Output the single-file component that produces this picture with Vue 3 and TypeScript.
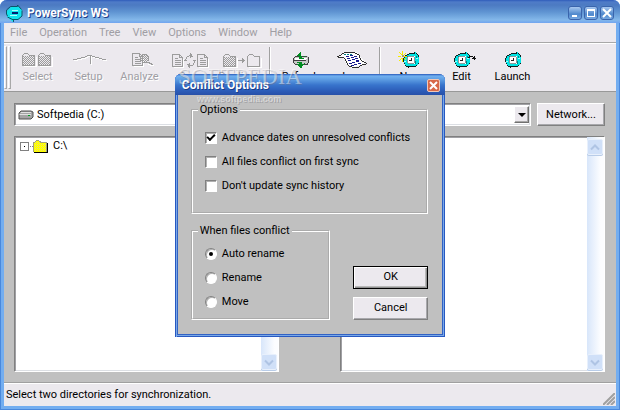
<script setup lang="ts">
import { ref } from 'vue'

interface Tool {
  label: string
  icon: string
  disabled?: boolean
}

const menus: string[] = ['File', 'Operation', 'Tree', 'View', 'Options', 'Window', 'Help']

const toolGroups: Tool[][] = [
  [
    { label: 'Select', icon: 'select', disabled: true },
    { label: 'Setup', icon: 'setup', disabled: true },
    { label: 'Analyze', icon: 'analyze', disabled: true },
    { label: 'Sync', icon: 'sync', disabled: true },
    { label: 'Duplicate', icon: 'duplicate', disabled: true },
  ],
  [
    { label: 'Refresh', icon: 'refresh' },
    { label: 'Log', icon: 'log' },
  ],
  [
    { label: 'New', icon: 'new' },
    { label: 'Edit', icon: 'edit' },
    { label: 'Launch', icon: 'launch' },
  ],
]

const panes = ref([
  { id: 'source', name: 'Source', drive: 'Softpedia (C:)', root: 'C:\\' },
  { id: 'target', name: 'Target', drive: '', root: '' },
])

const checks = ref([
  { id: 'advance', label: 'Advance dates on unresolved conflicts', on: true },
  { id: 'first', label: 'All files conflict on first sync', on: false },
  { id: 'history', label: "Don't update sync history", on: false },
])

const actions: string[] = ['Auto rename', 'Rename', 'Move']
const action = ref('Auto rename')
</script>

<template>
  <div class="window">
    <svg class="defs" width="0" height="0" aria-hidden="true">
      <defs>
        <pattern id="dots" width="2" height="2" patternUnits="userSpaceOnUse">
          <rect width="1" height="1" fill="#9c9c9c" />
          <rect x="1" y="1" width="1" height="1" fill="#9c9c9c" />
        </pattern>
        <pattern id="yellow" width="2" height="2" patternUnits="userSpaceOnUse">
          <rect width="2" height="2" fill="#ffff00" />
          <rect width="1" height="1" fill="#e8e070" />
        </pattern>
        <g id="folder" fill="none">
          <path d="M2 13.500H14V4" stroke="#fff" />
          <path d="M.5 12.500V2.500L2.500.5H5.500L7.500 2.500H12.500V12.500Z" stroke="#9c9c9c" />
        </g>
        <g id="page" fill="none">
          <path d="M1.500 13.500H11.500V4.500" stroke="#fff" />
          <path d="M.5.5H7.500L10.500 3.500V12.500H.5ZM7.500.5V3.500H10.500M2.500 4.500H6M2.500 6.500H8.500M2.500 8.500H8.500M2.500 10.500H8.500" stroke="#9c9c9c" />
        </g>
        <g id="ring">
          <path d="M5 2H11V0H12L16 4V11L13 14H6V16H5L1 12V5Z" fill="#00e4e4" />
          <path d="M1.500 12V10.500M.5 10V6M1.500 5.500V4M2 3.500H4M4 2.500H6M6 1.500H11M11.500 0V2M13 1.500H14M14 2.500H15M15.500 3V5M14.500 11.500H15.500M13 13.500H14M9 14.500H13M6 14.500H9M5.500 14V16M3 14.500H5M2 13.500H3" fill="none" stroke="#102020" />
          <path d="M4.500 6V4.500H7M12.500 9V11.500H10M13.500 4V6" fill="none" stroke="#008484" />
          <path d="M1 9.500H3M13 6.500H15" stroke="#a0ffff" />
          <rect x="5" y="4" width="7" height="8" fill="#fff" />
          <path d="M5 4.500H11M4.500 5V11M5 11.500H11M11.500 5V11" stroke="#909898" />
          <path d="M8.500 6V8.500H6" fill="none" stroke="#202020" />
        </g>
      </defs>
    </svg>

    <header class="titlebar">
      <svg class="logo" width="17" height="17" viewBox="0 0 17 17" aria-hidden="true">
        <path d="M1 6L5 2H11V0L16 5V11L12 15H7V17L1 12Z" fill="#10e4ec" />
        <path d="M1.500 11L.5 9V5L4.500 1.500H11.500V0L15.500 4.500M7.500 17V15L1.500 12M16 5.500V11L12 14.500H7" fill="none" stroke="#0c5468" />
        <path d="M6 7h6v2H6z" fill="#002070" />
        <path d="M4 10.500h7M6 5.500h6" stroke="#a8ffff" />
      </svg>
      <h1 class="caption">PowerSync WS</h1>
      <button class="sysbutton" type="button" aria-label="Minimize">
        <svg width="10" height="10" viewBox="0 0 10 10"><path d="M2 7h5v2H2z" fill="#fff" /></svg>
      </button>
      <button class="sysbutton" type="button" aria-label="Maximize">
        <svg width="10" height="10" viewBox="0 0 10 10"><path d="M1 1h8v8H1zM2 3v5h6V3z" fill="#fff" fill-rule="evenodd" /></svg>
      </button>
      <button class="sysbutton" type="button" aria-label="Close">
        <svg width="10" height="10" viewBox="0 0 10 10"><path d="M1 1L9 9M9 1L1 9" stroke="#fff" stroke-width="2" /></svg>
      </button>
    </header>

    <div class="client">
      <nav class="menubar">
        <button v-for="m in menus" :key="m" class="menu" type="button">{{ m }}</button>
      </nav>

      <div class="toolbar">
        <span class="grip"></span>
        <span class="grip"></span>
        <div v-for="(group, g) in toolGroups" :key="g" class="group">
          <button v-for="t in group" :key="t.label" class="tool" type="button" :disabled="t.disabled">
            <svg width="40" height="18" viewBox="0 0 40 18" shape-rendering="crispEdges" aria-hidden="true">
              <template v-if="t.icon === 'select'">
                <g transform="translate(4 2)"><path d="M1 3h11v9H1z" fill="url(#dots)" /><use href="#folder" /></g>
                <g transform="translate(20 2)"><path d="M1 3h11v9H1z" fill="url(#dots)" /><use href="#folder" /></g>
              </template>
              <template v-else-if="t.icon === 'setup'">
                <path d="M4 8.500H8M8 7.500H12M12 6.500H16M16 5.500H18M18 4.500H23M23 5.500H26M26 6.500H30M30 7.500H33M33 8.500H37M21.500 5V13" transform="translate(1 1)" stroke="#fff" />
                <path d="M4 8.500H8M8 7.500H12M12 6.500H16M16 5.500H18M18 4.500H23M23 5.500H26M26 6.500H30M30 7.500H33M33 8.500H37M21.500 5V13" stroke="#9c9c9c" />
              </template>
              <template v-else-if="t.icon === 'analyze'">
                <g transform="translate(12 2)"><use href="#page" /></g>
                <rect x="21" y="4" width="7" height="7" fill="url(#dots)" />
                <path d="M22 3.500H27M20.500 5V10M28.500 5V10M22 11.500H28M21 4.500H22M27 4.500H28M28 11.500H30M29 12.500H32M31 13.500H33" stroke="#9c9c9c" fill="none" />
                <path d="M30 14.500H34M28 13.500H30" stroke="#fff" />
              </template>
              <template v-else-if="t.icon === 'sync'">
                <g transform="translate(1 3)"><use href="#page" /></g>
                <g transform="translate(26 3)"><use href="#page" /></g>
                <path d="M14.500 8V10M15.500 6V8M16 5.500H18M18 4.500H21M19.500 2V7M20.500 3V6M21 5.500H22M13 9.500H16M23.500 9V12M22.500 12V14M20 14.500H22M17 14.500H20M18.500 12V17M17.500 13V16M22 9.500H25M16 13.500H17" fill="none" stroke="#9c9c9c" />
              </template>
              <template v-else-if="t.icon === 'duplicate'">
                <g transform="translate(1 3)"><path d="M1 3h11v9H1z" fill="url(#dots)" /><use href="#folder" /></g>
                <g transform="translate(25 3)"><use href="#folder" /></g>
                <path d="M16 9.500H23M21.500 8V11M20.500 7V12" stroke="#9c9c9c" />
              </template>
              <template v-else-if="t.icon === 'refresh'">
                <path d="M12 8L15 5H26L28 7V12L25 14H14L12 12Z" fill="#c8c8c8" />
                <path d="M14 5.500H26M13 6.500H14M12.500 7V12M13 12.500H14M14 13.500H26M26 12.500H27M27.500 6V12M26 13.500H27M13 9.500H25" fill="none" stroke="#404040" />
                <path d="M14 7.500H26M14 8.500H25" stroke="#fff" />
                <path d="M18 8V5H16V4H17V3H18V2H19V1H20V5H21V8ZM20 6H21V7H23V5H24V6H23V8H20ZM19 11H21V13H24V12H23V14H22V15H21V17H19V16H18V15H17V14H16V13H18V12H16V11Z" fill="#008c20" />
              </template>
              <template v-else-if="t.icon === 'log'">
                <path d="M5 6L12 1H24L27 4L34 12L20 17L15 14L12 8L8 6Z" fill="#fff" />
                <path d="M5 5.500H7M7 4.500H9M9 3.500H10M10 2.500H12M12 1.500H23M23 2.500H25M25 3.500H27M27.500 4V7M28.500 7V9M29.500 9V10M30 10.500H32M32 11.500H34M34 12.500H35M30 13.500H34M28 14.500H30M27 15.500H28M20 16.500H27M17 15.500H20M16 14.500H17M15.500 12V14M14.500 10V12M13.500 8V10M12 7.500H13M6 6.500H12" fill="none" stroke="#303030" />
                <path d="M14 5.500H18M18 4.500H22M22 5.500H25M15 7.500H19M19 6.500H23M23 7.500H26M16 9.500H20M20 8.500H24M24 9.500H27M17 12.500H20M20 11.500H24M24 10.500H28M19 14.500H22M22 13.500H26M26 12.500H29" stroke="#181890" stroke-dasharray="3 1" />
                <path d="M12 3.500H20" stroke="#008080" stroke-dasharray="2 1" />
              </template>
              <template v-else>
                <g transform="translate(12 1)"><use href="#ring" /></g>
                <g v-if="t.icon === 'new'" stroke="#f4ec00">
                  <path d="M11.500 0V4M11.500 7V11M7 5.500H10M13 5.500H16" />
                  <path d="M8 1.500H9M9 2.500H10M10 3.500H11M14 2.500H15M13 3.500H14M8 9.500H9M9 8.500H10M10 7.500H11M13 7.500H14M14 8.500H15" />
                  <path d="M11 4h2v2h-2z" fill="#a8a070" stroke="none" />
                </g>
                <path v-if="t.icon === 'edit'" d="M26 6.500H28M28 5.500H31M31.500 6V8M30 7.500H34M32.500 5V9" fill="none" stroke="#101010" />
              </template>
            </svg>
            <span>{{ t.label }}</span>
          </button>
        </div>
      </div>

      <main class="workspace">
        <section v-for="p in panes" :key="p.id" class="side">
          <div class="drivebar">
            <div class="combo">
              <svg v-if="p.drive" width="16" height="10" viewBox="0 0 16 10" aria-hidden="true">
                <path d="M1 3L3 1H13L15 2V7L13 9H1Z" fill="#a4a4a4" stroke="#505050" />
                <path d="M3 2.500H13M1.500 4.500H13" stroke="#e0e0e0" />
                <path d="M10 5h2v1h-2z" fill="#00a020" />
              </svg>
              <select v-model="p.drive" :aria-label="p.name + ' drive'">
                <option :value="p.drive">{{ p.drive }}</option>
              </select>
              <span class="drop"></span>
            </div>
            <button class="push network" type="button">Network...</button>
          </div>
          <div class="pane">
            <ul class="tree">
              <li v-if="p.root" class="node">
                <button class="expander" type="button" aria-label="Expand"></button>
                <svg width="18" height="13" viewBox="-3 0 18 13" shape-rendering="crispEdges" aria-hidden="true">
                  <path d="M-3 6.500H0" stroke="#808080" stroke-dasharray="1 1" />
                  <path d="M1 3h13v9H1zM2 1h5v2H2z" fill="url(#yellow)" />
                  <path d="M.5 12V2.500H2M2 1.500H3M3 .5H6M6 1.500H8M7 2.500H13.500V12" fill="none" stroke="#a0a080" />
                  <path d="M1 12.500H14.500V3" fill="none" stroke="#000" />
                </svg>
                <span>{{ p.root }}</span>
              </li>
            </ul>
            <div class="scrollbar" aria-hidden="true">
              <span class="arrow">
                <svg width="10" height="7" viewBox="0 0 10 7"><path d="M1 5.500L5 1.500L9 5.500" fill="none" stroke="#afc4e4" stroke-width="2" /></svg>
              </span>
              <span class="arrow">
                <svg width="10" height="7" viewBox="0 0 10 7"><path d="M1 1.500L5 5.500L9 1.500" fill="none" stroke="#afc4e4" stroke-width="2" /></svg>
              </span>
            </div>
          </div>
        </section>
      </main>

      <footer class="status">
        <span>Select two directories for synchronization.</span>
        <svg width="12" height="12" viewBox="0 0 12 12" aria-hidden="true">
          <path d="M0 12L12 0M4 12L12 4M8 12L12 8" stroke="#a0a0a0" stroke-width="2" />
        </svg>
      </footer>
    </div>

    <div class="overlay">
      <form class="dialog" role="dialog" aria-labelledby="dialog-title" @submit.prevent>
        <div class="dialog-title">
          <h2 id="dialog-title" class="caption">Conflict Options</h2>
          <button class="close" type="button" aria-label="Close dialog">
            <svg width="9" height="9" viewBox="0 0 9 9"><path d="M1 1L8 8M8 1L1 8" stroke="#fff" stroke-width="2" /></svg>
          </button>
        </div>
        <div class="dialog-body">
          <fieldset class="box">
            <legend>Options</legend>
            <label v-for="c in checks" :key="c.id" class="choice">
              <input v-model="c.on" class="check" type="checkbox" />
              <span>{{ c.label }}</span>
            </label>
          </fieldset>
          <div class="lower">
            <fieldset class="box">
              <legend>When files conflict</legend>
              <label v-for="a in actions" :key="a" class="choice">
                <input v-model="action" class="radio" type="radio" name="action" :value="a" />
                <span>{{ a }}</span>
              </label>
            </fieldset>
            <div class="buttons">
              <button class="push default" type="submit">OK</button>
              <button class="push" type="button">Cancel</button>
            </div>
          </div>
        </div>
      </form>
    </div>

    <div class="watermark">
      <span class="brand">SOFTPEDIA</span>
      <span class="site">www.softpedia.com</span>
    </div>
  </div>
</template>

<style>
body {
  margin: 0;
  background: #fff;
}
</style>

<style scoped>
.window {
  position: relative;
  display: flex;
  flex-direction: column;
  box-sizing: border-box;
  min-height: 100vh;
  padding: 0 4px 4px;
  border-radius: 7px 7px 0 0;
  background: #73adf0;
  box-shadow: inset 1px 0 #4a88dc, inset -1px -1px #4a88dc;
  font: 11px/16px Roboto, "Liberation Sans", sans-serif;
  color: #000;
  overflow: hidden;
}
.defs {
  position: absolute;
}
button,
select,
input {
  margin: 0;
  padding: 0;
  border: 0;
  border-radius: 0;
  font: inherit;
  color: inherit;
}
.titlebar {
  display: flex;
  align-items: center;
  gap: 2px;
  height: 23px;
  margin: 0 -4px;
  padding: 3px 6px 0;
  box-sizing: border-box;
  background: linear-gradient(#2f5cba 0, #4f7cc8 2px, #4c7ac2 5px, #5f94d2 12px, #84b8ea 20px, #70a4f0 23px);
}
.caption {
  flex: 1;
  margin: 0;
  font: bold 12px/16px Roboto, "Liberation Sans", sans-serif;
  color: #fff;
  text-shadow: 1px 1px #1c3c88;
  white-space: nowrap;
}
.titlebar .caption {
  padding-left: 2px;
}
.sysbutton {
  display: grid;
  place-items: center;
  width: 14px;
  height: 14px;
  border: 1px solid #3a64ac;
  border-radius: 3px;
  background: linear-gradient(#a8c8f0, #4f88cc 60%, #78a8e0);
}
.client {
  flex: 1;
  display: flex;
  flex-direction: column;
  background: #c0c0c0;
}
.menubar {
  display: flex;
  height: 19px;
  gap: 12px;
  padding: 0 6px;
  background: #ece9ee;
  border-bottom: 1px solid #a8a8a8;
}
.menu {
  background: none;
  color: #a09ea4;
}
.toolbar {
  display: flex;
  box-sizing: border-box;
  height: 49px;
  padding-bottom: 1px;
  background: #ece9ee;
  border-top: 1px solid #fff;
  border-bottom: 1px solid #989898;
}
.grip {
  width: 1px;
  margin: 2px 1px 1px 0;
  border: solid;
  border-width: 1px;
  border-color: #fff #a8a8a8 #a8a8a8 #fff;
}
.group {
  display: flex;
}
.group + .group::before {
  content: "";
  width: 1px;
  margin: 3px 4px 2px 2px;
  background: #a0a0a0;
  border-right: 1px solid #fff;
}
.tool {
  display: flex;
  flex-direction: column;
  align-items: center;
  width: 51px;
  padding-top: 7px;
  background: none;
}
.tool:disabled {
  color: #a09ea4;
  text-shadow: 1px 1px #fff;
}
.workspace {
  flex: 1;
  display: grid;
  grid-template-columns: 1fr 1fr;
  column-gap: 61px;
  padding: 11px 11px 11px 10px;
}
.side {
  display: flex;
  flex-direction: column;
  gap: 10px;
  min-width: 0;
}
.drivebar {
  display: flex;
  gap: 6px;
  height: 23px;
}
.combo,
.pane {
  border: 1px solid;
  border-color: #808080 #fff #fff #808080;
  box-shadow: inset 1px 1px #a0a0a4, inset -1px -1px #dcdfe4;
  background: #fff;
}
.combo {
  flex: 1;
  display: flex;
  align-items: center;
  gap: 3px;
  min-width: 0;
  padding: 2px 1px 2px 3px;
}
.combo select {
  flex: 1;
  min-width: 0;
  appearance: none;
  background: none;
}
.drop {
  display: grid;
  place-items: center;
  align-self: stretch;
  width: 13px;
  border: 1px solid;
  border-color: #fff #707070 #707070 #fff;
  box-shadow: inset -1px -1px #a8a8a8;
  background: #ece9ee;
}
.drop::before {
  content: "";
  border: solid transparent;
  border-width: 4px 4px 0;
  border-top-color: #000;
}
.push {
  height: 23px;
  border: 1px solid;
  border-color: #fff #808080 #808080 #fff;
  box-shadow: inset -1px -1px #a8a8ac;
  background: #ece9ee;
  text-align: center;
}
.network {
  width: 68px;
}
.pane {
  flex: 1;
  display: flex;
}
.tree {
  flex: 1;
  margin: 0;
  padding: 1px 5px;
  list-style: none;
}
.node {
  display: flex;
  align-items: center;
}
.node svg {
  margin: 0 5px 0 1px;
}
.expander {
  display: grid;
  place-items: center;
  width: 9px;
  height: 9px;
  border: 1px solid #808080;
  background: #fff;
}
.expander::before {
  content: "";
  width: 1px;
  height: 1px;
  background: #000;
}
.scrollbar {
  display: flex;
  flex-direction: column;
  justify-content: space-between;
  width: 16px;
  padding: 2px 1px 1px 0;
  background: linear-gradient(90deg, #d8e6fa, #fcfdff 80%);
}
.arrow {
  display: grid;
  place-items: center;
  height: 14px;
  border: 1px solid #e8f0fc;
  border-radius: 2px;
  background: #d0e0f8;
  box-shadow: 0 1px #b8cce8;
}
.status {
  display: flex;
  justify-content: space-between;
  align-items: center;
  height: 22px;
  padding: 0 1px 0 2px;
  background: #ece9ee;
  border-top: 1px solid #fff;
  box-shadow: 0 -1px #a0a0a0;
}
.status svg {
  align-self: flex-end;
  margin-bottom: 1px;
}
.overlay {
  position: absolute;
  inset: 0;
  display: grid;
  place-items: center;
}
.dialog {
  padding: 0 3px 3px;
  border-radius: 6px 6px 0 0;
  background: #3262c4;
  box-shadow: inset 1px 0 #2858c0, inset 2px 0 #78a8e8, inset -1px -1px #2858c0, inset -2px -2px #78a8e8;
}
.dialog-title {
  display: flex;
  align-items: center;
  height: 21px;
  margin: 0 -3px;
  padding: 2px 5px 0 7px;
  box-sizing: border-box;
  border-radius: 6px 6px 0 0;
  background: linear-gradient(#2858b8 0, #70b0f0 2px, #60a0e4 5px, #3874cc 11px, #2c5cb8 17px, #2850a8);
}
.close {
  display: grid;
  place-items: center;
  width: 13px;
  height: 13px;
  border: 1px solid #f0c8b8;
  border-radius: 2px;
  background: #d86848;
}
.dialog-body {
  display: flex;
  flex-direction: column;
  gap: 9px;
  padding: 7px 14px 14px 13px;
  background: #c0c0c0;
}
.box {
  margin: 0;
  padding: 8px 16px 14px 12px;
  border: 2px groove #fff;
  min-width: 0;
}
.box legend {
  margin-left: -7px;
  padding: 0 2px;
}
.choice {
  display: flex;
  align-items: center;
  gap: 5px;
  height: 24px;
  white-space: nowrap;
}
.check,
.radio {
  display: grid;
  place-items: center;
  appearance: none;
  width: 12px;
  height: 12px;
  border: 1px solid;
  border-color: #808080 #fff #fff #808080;
  background: #fff;
  box-shadow: inset 1px 1px #b0b0b0;
}
.radio {
  border-radius: 50%;
}
.radio:checked::before {
  content: "";
  width: 4px;
  height: 4px;
  border-radius: 50%;
  background: #000;
}
.check:checked::before {
  content: "";
  width: 8px;
  height: 5px;
  border: solid #000;
  border-width: 0 0 2px 2px;
  box-sizing: border-box;
  transform: translateY(-1px) rotate(-45deg);
}
.lower {
  display: flex;
  justify-content: space-between;
  align-items: flex-end;
}
.lower .box {
  padding: 3px 36px 4px 12px;
}
.buttons {
  display: flex;
  flex-direction: column;
  gap: 8px;
}
.buttons .push {
  width: 75px;
}
.push.default {
  border-color: #000;
  box-shadow: inset 1px 1px #fff, inset -1px -1px #909090, inset -2px -2px #b8b8b8;
}
.watermark {
  position: absolute;
  top: 66px;
  left: 178px;
  display: flex;
  flex-direction: column;
  gap: 6px;
  pointer-events: none;
  color: rgba(255, 255, 255, 0.45);
  text-shadow: 1px 1px rgba(110, 110, 120, 0.35);
}
.brand {
  font: 23px/21px "Liberation Serif", serif;
}
.site {
  padding-left: 19px;
  font: bold 9px/12px "Liberation Sans", sans-serif;
}
</style>
